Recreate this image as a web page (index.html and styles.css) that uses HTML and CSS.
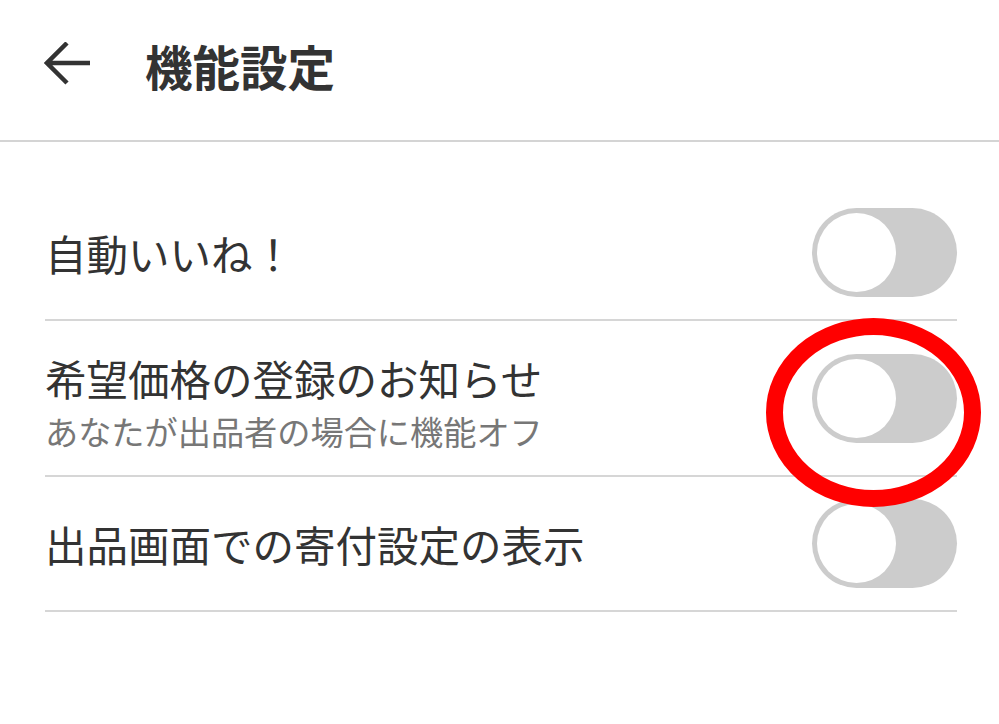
FILE: index.html
```html
<!DOCTYPE html>
<html lang="ja">
<head>
<meta charset="utf-8">
<title>機能設定</title>
<link rel="stylesheet" href="styles.css">
</head>
<body>
<header class="header">
  <svg class="back" width="48" height="48" viewBox="0 0 48 48" aria-hidden="true">
    <path d="M46 21H6M23 1L3 21l20 20" fill="none" stroke="#333" stroke-width="4.5" stroke-linecap="butt" stroke-linejoin="miter"/>
  </svg>
  <h1 class="title">機能設定</h1>
</header>
<main class="list">
  <div class="row">
    <div class="label">自動いいね！</div>
    <div class="toggle"><span class="thumb"></span></div>
  </div>
  <div class="row row-tall">
    <div class="text">
      <div class="label label-lead">希望価格の登録のお知らせ</div>
      <div class="sub">あなたが出品者の場合に機能オフ</div>
    </div>
    <div class="toggle-wrap">
      <div class="toggle"><span class="thumb"></span></div>
      <svg class="mark" width="215" height="189" viewBox="0 0 215 189" aria-hidden="true">
        <ellipse cx="107.5" cy="94.5" rx="99" ry="86" fill="none" stroke="#ff0000" stroke-width="17"/>
      </svg>
    </div>
  </div>
  <div class="row">
    <div class="label">出品画面での寄付設定の表示</div>
    <div class="toggle"><span class="thumb"></span></div>
  </div>
</main>
</body>
</html>
```

FILE: styles.css
```css
* { box-sizing: border-box; }

body {
  margin: 0;
  background: #fff;
  font-family: "Noto Sans CJK JP", "Noto Sans", sans-serif;
  color: #333;
}

.header {
  display: flex;
  align-items: center;
  height: 142px;
  padding: 0 0 9px 44px;
  border-bottom: 2px solid #d4d4d4;
}

.back { flex: none; }

.title {
  margin: 0 0 0 53px;
  font-size: 47.5px;
  font-weight: 700;
  line-height: 60px;
  color: #333;
}

.list {
  width: 912px;
  margin: 44px 0 0 45px;
}

.row {
  display: flex;
  align-items: center;
  justify-content: space-between;
  padding: 22px 0;
  border-bottom: 2px solid #d6d6d6;
}

.row-tall { padding: 24px 0; }

.label {
  font-size: 41.5px;
  line-height: 56px;
  color: #333;
  padding-left: 0;
}

.label-lead { line-height: 66px; }

.sub {
  font-size: 33.2px;
  line-height: 40px;
  color: #777;
  padding-left: 0;
}

.toggle {
  display: flex;
  align-items: center;
  width: 145px;
  height: 89px;
  padding-left: 5px;
  border-radius: 45px;
  background: #cccccc;
}

.thumb {
  width: 79px;
  height: 79px;
  border-radius: 50%;
  background: #fff;
}

.toggle-wrap { position: relative; }

.mark {
  position: absolute;
  left: -46px;
  top: -36px;
}
```
